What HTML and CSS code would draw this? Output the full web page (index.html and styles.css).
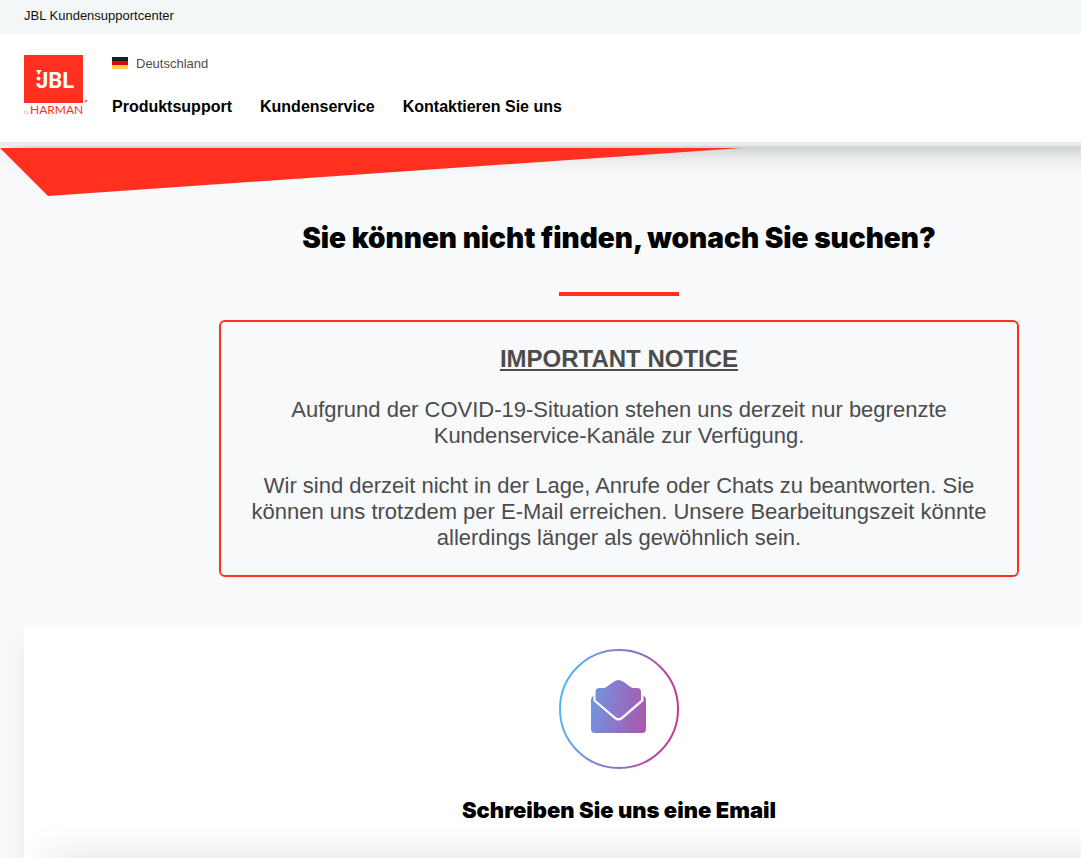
FILE: index.html
```html
<!DOCTYPE html>
<html lang="de">
<head>
    <meta charset="UTF-8">
    <meta name="viewport" content="width=device-width, initial-scale=1.0">
    <title>JBL Kundensupportcenter</title>
    <link rel="stylesheet" href="styles.css">
</head>
<body>
    <div class="topbar">JBL Kundensupportcenter</div>

    <header class="header">
        <a class="logo" href="#" aria-label="JBL">
            <svg width="66" height="62" viewBox="0 0 66 62">
                <rect width="59" height="48" fill="#ff3020"/>
                <path d="M12 15h5.500l-2.750 5z" fill="#fff"/>
                <circle cx="14.500" cy="23.500" r="2" fill="#fff"/>
                <text class="logo-name" x="12" y="33">JBL</text>
                <text class="logo-by" x="0" y="59">by</text>
                <text class="logo-brand" x="6" y="59">HARMAN</text>
                <circle cx="62" cy="46" r="1" fill="none" stroke="#ff3020" stroke-width=".8"/>
            </svg>
        </a>
        <div class="header-menu">
            <a class="country" href="#">
                <svg class="flag" width="16" height="12" viewBox="0 0 16 12">
                    <rect width="16" height="4" fill="#151f1d"/>
                    <rect y="4" width="16" height="4" fill="#e2001a"/>
                    <rect y="8" width="16" height="4" fill="#ffcd48"/>
                </svg>
                Deutschland
            </a>
            <nav class="nav">
                <a href="#">Produktsupport</a>
                <a href="#">Kundenservice</a>
                <a href="#">Kontaktieren Sie uns</a>
            </nav>
        </div>
    </header>

    <main class="content">
        <div class="wedge"></div>
        <h1 class="title">Sie können nicht finden, wonach Sie suchen?</h1>
        <div class="divider"></div>

        <section class="notice">
            <h2>IMPORTANT NOTICE</h2>
            <p>Aufgrund der COVID-19-Situation stehen uns derzeit nur begrenzte Kundenservice-Kanäle zur Verfügung.</p>
            <p>Wir sind derzeit nicht in der Lage, Anrufe oder Chats zu beantworten. Sie können uns trotzdem per E-Mail erreichen. Unsere Bearbeitungszeit könnte allerdings länger als gewöhnlich sein.</p>
        </section>

        <section class="card">
            <svg class="mail-icon" width="120" height="120" viewBox="0 0 120 120">
                <defs>
                    <linearGradient id="mail" gradientUnits="userSpaceOnUse" x1="0" y1="50" x2="120" y2="70">
                        <stop offset="0" stop-color="#4fb8fa"/>
                        <stop offset="1" stop-color="#cb3493"/>
                    </linearGradient>
                </defs>
                <circle cx="60" cy="60" r="59" fill="none" stroke="url(#mail)" stroke-width="2"/>
                <g fill="url(#mail)">
                    <path d="M36.500 51V43Q36.500 39 40.500 39H44Q46 39 48 37.500L55 32.500Q59.500 29.500 64 32.500L71 37.500Q73 39 75 39H78Q82 39 82 43V51L63 67.500Q59.500 70.500 56 67.500Z"/>
                    <path d="M34.500 46.500V52L55.500 70Q59.500 73 63.500 70L84.500 52V46.500Q87 48.500 87 51V80Q87 84 83 84H36Q32 84 32 80V51Q32 48.500 34.500 46.500Z"/>
                </g>
            </svg>
            <h2 class="card-title">Schreiben Sie uns eine Email</h2>
            <div class="card-panel"></div>
        </section>
    </main>
</body>
</html>
```
FILE: styles.css
```css
html {
    overflow: hidden;
}
body {
    margin: 0;
    height: 100vh;
    overflow: hidden;
    background-color: #f8f9fb;
    color: #4c4c4c;
    font-family: "Liberation Sans", Arial, sans-serif;
}
a {
    color: inherit;
    text-decoration: none;
}
.topbar {
    padding: 0 24px;
    line-height: 32px;
    height: 34px;
    background-color: #f3f7f8;
    color: #111;
    font-size: 13px;
}
/* desktop layout, runs past the edge of narrow windows */
.header, .content {
    box-sizing: border-box;
    min-width: 1238px;
}
.header {
    display: flex;
    gap: 22px;
    padding: 21px 24px 25px;
    background-color: #fff;
    border-bottom: 4px solid #e5edee;
    box-shadow: 0 18px 24px -14px rgba(0, 0, 0, 0.25);
}
.logo svg {
    display: block;
}
.logo-name {
    fill: #fff;
    font: bold 22px Roboto, "Liberation Sans", sans-serif;
}
.logo-by {
    fill: #ff9d94;
    font: 5px "Liberation Sans", sans-serif;
}
.logo-brand {
    fill: #ff3020;
    font: 12px Lato, sans-serif;
}
.country {
    display: flex;
    align-items: center;
    gap: 8px;
    height: 16px;
    font-size: 13px;
}
.nav {
    display: flex;
    gap: 28px;
    margin-top: 26px;
    color: #000;
    font-size: 16px;
    font-weight: bold;
    line-height: 20px;
}
.content {
    position: relative;
    display: flow-root;
    margin-top: 2px;
}
.wedge {
    width: 742px;
    height: 48px;
    background-color: #ff3020;
    clip-path: polygon(0 0, 100% 0, 48px 100%);
}
.title {
    margin: 22px 0 0;
    color: #000;
    font-family: Inter, sans-serif;
    font-size: 28px;
    font-weight: 900;
    line-height: 40px;
    text-align: center;
}
.divider {
    width: 120px;
    height: 4px;
    margin: 34px auto 24px;
    background-color: #ff3020;
}
.notice {
    box-sizing: border-box;
    max-width: 800px;
    margin: 0 auto 48px;
    padding: 23px 28px 24px;
    border: 2px solid #ff3020;
    border-radius: 6px;
    font-size: 22px;
    line-height: 26px;
    text-align: center;
}
.notice h2 {
    margin: 0;
    font-size: 24px;
    line-height: 28px;
    text-decoration: underline;
}
.notice p {
    margin: 24px 0 0;
}
.card {
    margin: 0 24px;
    padding: 24px 24px 0;
    overflow: hidden;
    background-color: #fff;
    border-radius: 6px;
    box-shadow: 0 16px 24px rgba(0, 0, 0, 0.07);
    text-align: center;
}
.mail-icon {
    display: block;
    margin: 0 auto;
}
.card-title {
    margin: 25px 0 0;
    color: #000;
    font-family: Inter, sans-serif;
    font-size: 22px;
    font-weight: 900;
    line-height: 32px;
}
.card-panel {
    height: 160px;
    margin-top: 32px;
    background-color: #fff;
    box-shadow: 0 0 40px rgba(0, 0, 0, 0.12);
}
```
